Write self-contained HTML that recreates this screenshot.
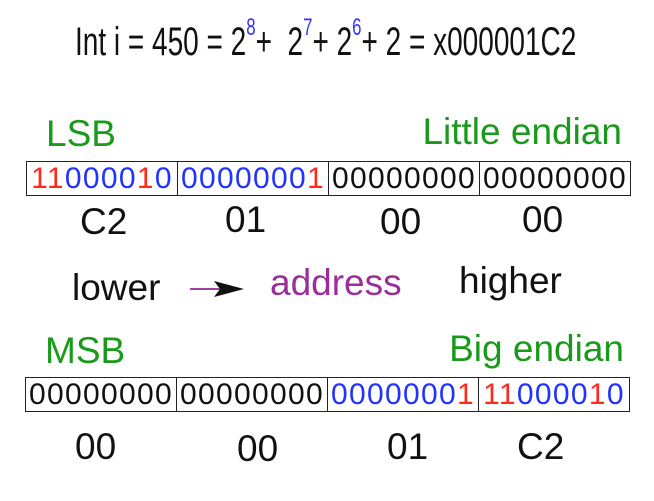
<!DOCTYPE html>
<html><head><meta charset="utf-8"><style>
body{margin:0;width:654px;height:501px;background:#fff;position:relative;overflow:hidden;font-family:"Liberation Sans",Arial,sans-serif;}
.a{position:absolute;white-space:nowrap;line-height:1;}
.t{font-size:40px;transform:scaleX(0.70);transform-origin:0 0;color:#111;}
.t sup{color:#3333ff;font-size:24px;position:relative;top:-6px;vertical-align:top;}
.g{color:#1a9a1a;font-size:37px;}
.row{position:absolute;display:flex;border:1.5px solid #222;}
.row div{width:150px;height:33px;border-right:1.5px solid #222;font-size:30px;line-height:34px;text-align:center;letter-spacing:1.3px;overflow:hidden;}
.row div:last-child{border-right:none;}
.r{color:#ff2a1a}.b{color:#2233ff}.k{color:#111}
.l{font-size:37px;color:#111;}
</style></head><body>
<div class="a t" style="left:75px;top:22px;">Int i = 450 = 2<sup>8</sup>+&nbsp; 2<sup>7</sup>+ 2<sup>6</sup>+ 2 = x000001C2</div>

<div class="a g" style="left:46px;top:115px;">LSB</div>
<div class="a g" style="right:32px;top:113px;">Little endian</div>
<div class="row" style="left:26px;top:161px;">
<div><span class="r">11</span><span class="b">0000</span><span class="r">1</span><span class="b">0</span></div>
<div><span class="b">0000000</span><span class="r">1</span></div>
<div class="k">00000000</div>
<div class="k">00000000</div>
</div>
<div class="a l" style="left:80px;top:203px;">C2</div>
<div class="a l" style="left:225px;top:201px;">01</div>
<div class="a l" style="left:380px;top:203px;">00</div>
<div class="a l" style="left:522px;top:201px;">00</div>

<div class="a l" style="left:72px;top:269px;">lower</div>
<svg class="a" style="left:188px;top:278px;" width="58" height="22"><line x1="2" y1="11" x2="32" y2="11" stroke="#a040a0" stroke-width="2"/><polygon points="26,3 56,11 26,19 32,11" fill="#111"/></svg>
<div class="a l" style="left:270px;top:264px;color:#9a2f9a;">address</div>
<div class="a l" style="left:459px;top:262px;">higher</div>

<div class="a g" style="left:45px;top:332px;">MSB</div>
<div class="a g" style="right:30px;top:330px;">Big endian</div>
<div class="row" style="left:25px;top:377px;">
<div class="k">00000000</div>
<div class="k">00000000</div>
<div><span class="b">0000000</span><span class="r">1</span></div>
<div><span class="r">11</span><span class="b">0000</span><span class="r">1</span><span class="b">0</span></div>
</div>
<div class="a l" style="left:75px;top:428px;">00</div>
<div class="a l" style="left:237px;top:430px;">00</div>
<div class="a l" style="left:387px;top:428px;">01</div>
<div class="a l" style="left:517px;top:428px;">C2</div>
</body></html>
